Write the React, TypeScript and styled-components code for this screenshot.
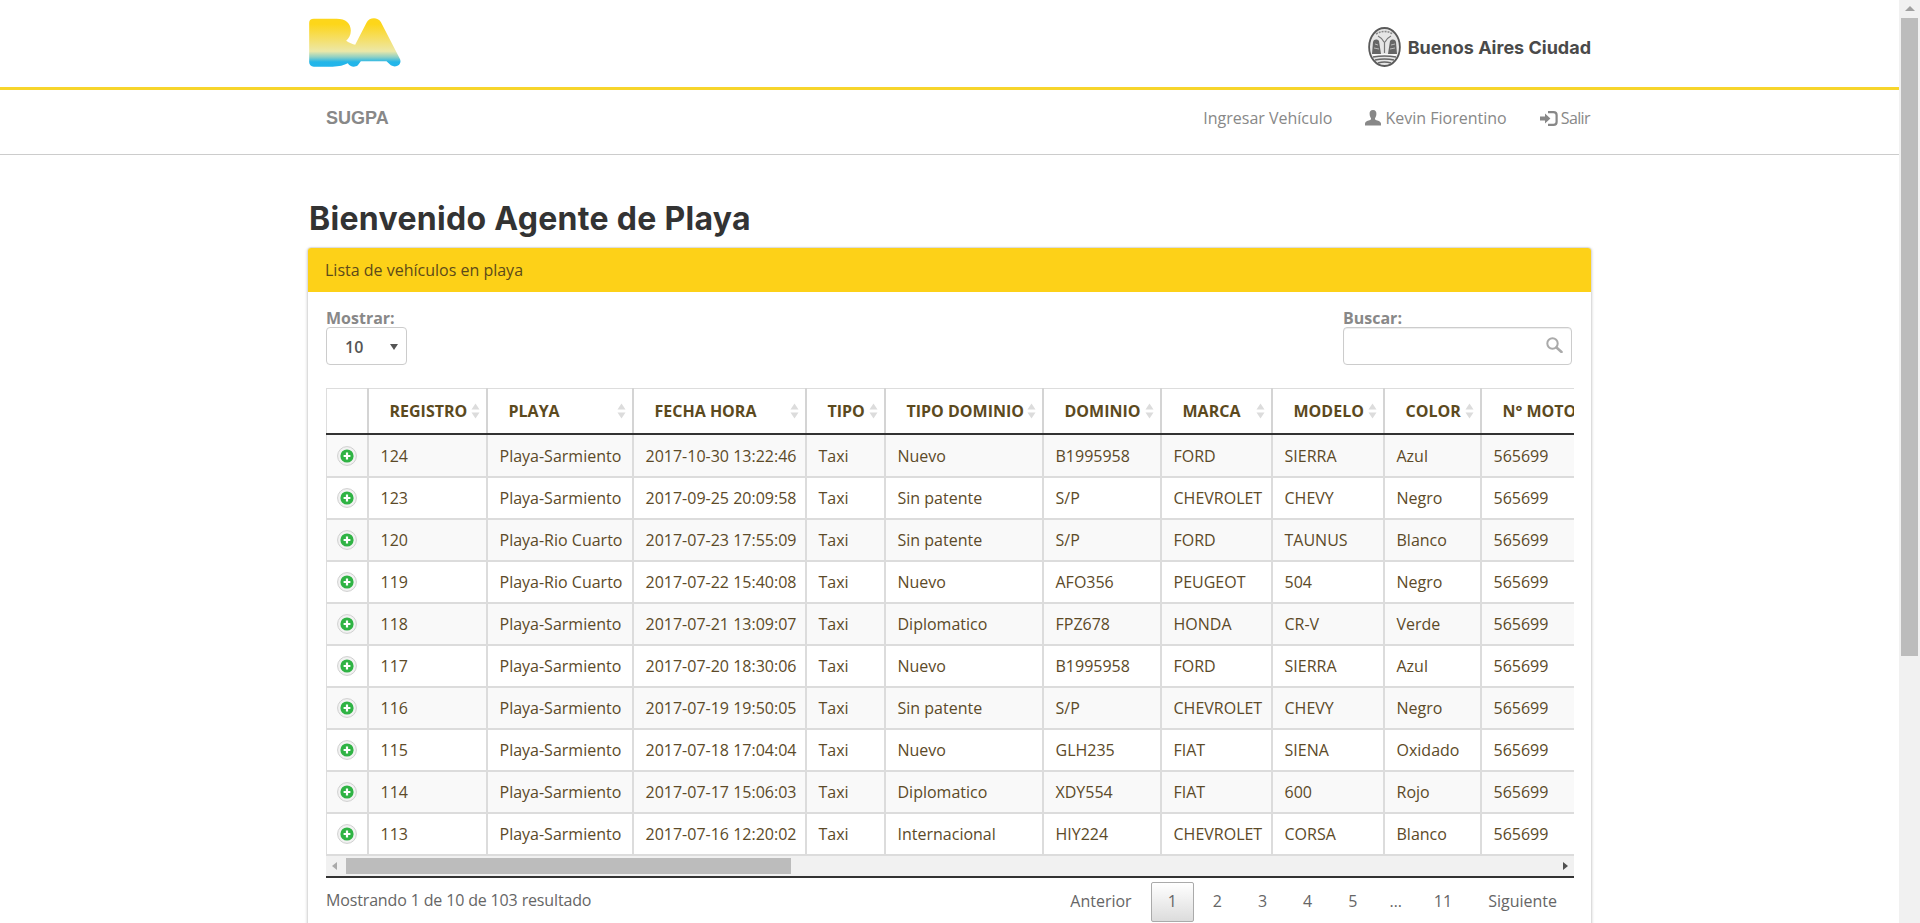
import { FC } from "react";
import styled, { createGlobalStyle } from "styled-components";

interface Vehicle {
  id: number;
  playa: string;
  fecha: string;
  tipo: string;
  tipoDominio: string;
  dominio: string;
  marca: string;
  modelo: string;
  color: string;
  motor: string;
}

const rows: Vehicle[] = [
  { id: 124, playa: "Playa-Sarmiento", fecha: "2017-10-30 13:22:46", tipo: "Taxi", tipoDominio: "Nuevo", dominio: "B1995958", marca: "FORD", modelo: "SIERRA", color: "Azul", motor: "565699" },
  { id: 123, playa: "Playa-Sarmiento", fecha: "2017-09-25 20:09:58", tipo: "Taxi", tipoDominio: "Sin patente", dominio: "S/P", marca: "CHEVROLET", modelo: "CHEVY", color: "Negro", motor: "565699" },
  { id: 120, playa: "Playa-Rio Cuarto", fecha: "2017-07-23 17:55:09", tipo: "Taxi", tipoDominio: "Sin patente", dominio: "S/P", marca: "FORD", modelo: "TAUNUS", color: "Blanco", motor: "565699" },
  { id: 119, playa: "Playa-Rio Cuarto", fecha: "2017-07-22 15:40:08", tipo: "Taxi", tipoDominio: "Nuevo", dominio: "AFO356", marca: "PEUGEOT", modelo: "504", color: "Negro", motor: "565699" },
  { id: 118, playa: "Playa-Sarmiento", fecha: "2017-07-21 13:09:07", tipo: "Taxi", tipoDominio: "Diplomatico", dominio: "FPZ678", marca: "HONDA", modelo: "CR-V", color: "Verde", motor: "565699" },
  { id: 117, playa: "Playa-Sarmiento", fecha: "2017-07-20 18:30:06", tipo: "Taxi", tipoDominio: "Nuevo", dominio: "B1995958", marca: "FORD", modelo: "SIERRA", color: "Azul", motor: "565699" },
  { id: 116, playa: "Playa-Sarmiento", fecha: "2017-07-19 19:50:05", tipo: "Taxi", tipoDominio: "Sin patente", dominio: "S/P", marca: "CHEVROLET", modelo: "CHEVY", color: "Negro", motor: "565699" },
  { id: 115, playa: "Playa-Sarmiento", fecha: "2017-07-18 17:04:04", tipo: "Taxi", tipoDominio: "Nuevo", dominio: "GLH235", marca: "FIAT", modelo: "SIENA", color: "Oxidado", motor: "565699" },
  { id: 114, playa: "Playa-Sarmiento", fecha: "2017-07-17 15:06:03", tipo: "Taxi", tipoDominio: "Diplomatico", dominio: "XDY554", marca: "FIAT", modelo: "600", color: "Rojo", motor: "565699" },
  { id: 113, playa: "Playa-Sarmiento", fecha: "2017-07-16 12:20:02", tipo: "Taxi", tipoDominio: "Internacional", dominio: "HIY224", marca: "CHEVROLET", modelo: "CORSA", color: "Blanco", motor: "565699" },
];

const columns = [
  { title: "", width: 41 },
  { title: "REGISTRO", width: 119 },
  { title: "PLAYA", width: 146 },
  { title: "FECHA HORA", width: 173 },
  { title: "TIPO", width: 79 },
  { title: "TIPO DOMINIO", width: 158 },
  { title: "DOMINIO", width: 118 },
  { title: "MARCA", width: 111 },
  { title: "MODELO", width: 112 },
  { title: "COLOR", width: 97 },
  { title: "N° MOTOR", width: 140 },
];

const firstPages = ["1", "2", "3", "4", "5"];

const BaLogo: FC = () => (
  <svg width="92" height="49" viewBox="0 0 275 147">
    <defs>
      <linearGradient id="baGrad" x1="0" y1="0" x2="0" y2="1">
        <stop offset="0.12" stopColor="#fdd61a" />
        <stop offset="0.4" stopColor="#f6de60" />
        <stop offset="0.68" stopColor="#ece8a8" />
        <stop offset="0.8" stopColor="#8fd0c4" />
        <stop offset="0.9" stopColor="#24b6e8" />
        <stop offset="1" stopColor="#22b5ec" />
      </linearGradient>
    </defs>
    <path
      fill="url(#baGrad)"
      d="M14 2 L82 2 C110 2 125 16 125 38 C125 52 118 62 111 68 C120 74 130 78 138 80 L172 14 C180 -2 205 -4 215 12 L272 122 C280 138 262 152 245 142 L232 130 L155 130 L146 142 C136 150 122 146 116 136 C105 142 90 146 70 146 L14 146 C5 146 0 140 0 132 L0 14 C0 6 5 2 14 2 Z"
    />
  </svg>
);

const CityArms: FC = () => (
  <svg width="33" height="40" viewBox="0 0 33 40">
    <ellipse cx="16.5" cy="20" rx="15.4" ry="19" fill="#e6e6e6" stroke="#5a5a5a" strokeWidth="1.8" />
    <path d="M8 7 Q16.5 2 25 7" fill="none" stroke="#8a8a8a" strokeWidth="1.6" strokeDasharray="2 1" />
    <path d="M10 9 Q14 11 16 15 M23 9 Q19 11 17 15 M16.5 15 L16.5 26" fill="none" stroke="#777" strokeWidth="1.2" />
    <path d="M5 15 C6 12 9 12 11 14 L13 27 L4 27 Z" fill="#666" />
    <path d="M22 14 C24 12 27 12 28 15 L29 27 L20 27 Z" fill="#666" />
    <path d="M7 17 L10 18 M6 21 L11 22 M23 18 L27 17 M22 22 L27 21" stroke="#bbb" strokeWidth="1" />
    <path d="M4 27 L29 27 L28 29 L5 29 Z" fill="#fafafa" />
    <path d="M5 30 Q16.5 28 28 30 M7 33 Q16.5 31 26 33 M10 36 Q16.5 34 23 36" fill="none" stroke="#666" strokeWidth="1.5" />
  </svg>
);

const UserIcon: FC = () => (
  <svg width="16" height="16" viewBox="0 0 16 16">
    <path
      fill="#888"
      d="M8 0 C10.6 0 11.6 1.8 11.4 4 C11.3 6 10.6 7.4 10 8.2 L10 9.6 C11.4 10.6 15.4 10.8 16 13.4 L16 15.4 L0 15.4 L0 13.4 C0.6 10.8 4.6 10.6 6 9.6 L6 8.2 C5.4 7.4 4.7 6 4.6 4 C4.4 1.8 5.4 0 8 0 Z"
    />
  </svg>
);

const LoginIcon: FC = () => (
  <svg width="18" height="15" viewBox="0 0 18 15">
    <path fill="#888" d="M0 5.5 L5 5.5 L5 2.4 L10.4 7.5 L5 12.6 L5 9.5 L0 9.5 Z" />
    <path
      fill="none"
      stroke="#888"
      strokeWidth="2.2"
      d="M8 1.1 L13.5 1.1 C15.4 1.1 16.6 2.3 16.6 4 L16.6 11 C16.6 12.7 15.4 13.9 13.5 13.9 L8 13.9"
    />
  </svg>
);

const SearchIcon: FC = () => (
  <svg width="17" height="16" viewBox="0 0 17 16">
    <circle cx="6.5" cy="6.5" r="5.2" fill="none" stroke="#aaa" strokeWidth="2" />
    <path d="M10.5 10.5 L15.5 15" stroke="#aaa" strokeWidth="2.6" strokeLinecap="round" />
  </svg>
);

const PlusIcon: FC = () => (
  <svg width="20" height="20" viewBox="0 0 20 20">
    <circle cx="10" cy="10" r="9.4" fill="#f2f2f2" stroke="#cfcfcf" />
    <circle cx="10" cy="10" r="6.6" fill="#2fb344" />
    <path d="M10 6.6 L10 13.4 M6.6 10 L13.4 10" stroke="#fff" strokeWidth="2.2" />
  </svg>
);

const SortIcon: FC = () => (
  <svg width="9" height="16" viewBox="0 0 9 16">
    <path d="M4.5 0.5 L8.5 6.5 L0.5 6.5 Z" fill="#dcdcdc" />
    <path d="M4.5 15.5 L8.5 9.5 L0.5 9.5 Z" fill="#dcdcdc" />
  </svg>
);

const App: FC = () => {
  return (
    <Page>
      <GlobalStyle />
      <TopHeader>
        <HeaderInner>
          <BaLogo />
          <CityBrand>
            <CityArms />
            <CityName>Buenos Aires Ciudad</CityName>
          </CityBrand>
        </HeaderInner>
      </TopHeader>
      <NavBar>
        <NavInner>
          <Brand>SUGPA</Brand>
          <NavLinks>
            <NavLink>Ingresar Vehículo</NavLink>
            <NavLink>
              <UserIcon />
              Kevin Fiorentino
            </NavLink>
            <ExitLink>
              <LoginIcon />
              Salir
            </ExitLink>
          </NavLinks>
        </NavInner>
      </NavBar>
      <Main>
        <Title>Bienvenido Agente de Playa</Title>
        <Panel>
          <PanelHeading>Lista de vehículos en playa</PanelHeading>
          <PanelBody>
            <Filters>
              <Field>
                <FieldLabel>Mostrar:</FieldLabel>
                <SelectBox>
                  <span>10</span>
                  <SelectCaret />
                </SelectBox>
              </Field>
              <Field>
                <FieldLabel>Buscar:</FieldLabel>
                <SearchBox>
                  <SearchIcon />
                </SearchBox>
              </Field>
            </Filters>
            <TableClip>
              <Table>
                <colgroup>
                  {columns.map((col, i) => (
                    <col key={i} style={{ width: col.width }} />
                  ))}
                </colgroup>
                <thead>
                  <tr>
                    {columns.map((col, i) => (
                      <HeadCell key={i}>
                        {col.title && (
                          <HeadInner>
                            <span>{col.title}</span>
                            {col.title !== "N° MOTOR" && <SortIcon />}
                          </HeadInner>
                        )}
                      </HeadCell>
                    ))}
                  </tr>
                </thead>
                <tbody>
                  {rows.map((row, i) => (
                    <Row key={row.id} $odd={i % 2 === 0}>
                      <IconCell>
                        <PlusIcon />
                      </IconCell>
                      <Cell>{row.id}</Cell>
                      <Cell>{row.playa}</Cell>
                      <Cell>{row.fecha}</Cell>
                      <Cell>{row.tipo}</Cell>
                      <Cell>{row.tipoDominio}</Cell>
                      <Cell>{row.dominio}</Cell>
                      <Cell>{row.marca}</Cell>
                      <Cell>{row.modelo}</Cell>
                      <Cell>{row.color}</Cell>
                      <Cell>{row.motor}</Cell>
                    </Row>
                  ))}
                </tbody>
              </Table>
            </TableClip>
            <HScroll>
              <HArrow $dir="left" />
              <HThumb />
              <HArrow $dir="right" />
            </HScroll>
            <TableFooter>
              <FooterInfo>Mostrando 1 de 10 de 103 resultado</FooterInfo>
              <Pagination>
                <PageButton $current={false}>Anterior</PageButton>
                {firstPages.map((p) => (
                  <PageButton key={p} $current={p === "1"}>
                    {p}
                  </PageButton>
                ))}
                <PageGap>…</PageGap>
                <PageButton $current={false}>11</PageButton>
                <PageButton $current={false}>Siguiente</PageButton>
              </Pagination>
            </TableFooter>
          </PanelBody>
        </Panel>
      </Main>
      <VScroll>
        <VArrow />
        <VThumb />
      </VScroll>
    </Page>
  );
};

export default App;

// styled-components
const GlobalStyle = createGlobalStyle`
  html, body {
    margin: 0;
    height: 923px;
    overflow: hidden;
    background: #fff;
  }
  * {
    box-sizing: border-box;
  }
  body {
    font-family: "Open Sans", "Noto Sans", sans-serif;
    font-size: 16px;
    color: #5c4a28;
  }
`;

const Page = styled.div`
  height: 923px;
  padding-right: 21px;
  overflow: hidden;
`;

const TopHeader = styled.header`
  height: 90px;
  border-bottom: 3px solid #f7d52b;
`;

const HeaderInner = styled.div`
  width: 1285px;
  height: 87px;
  margin: 0 auto;
  padding: 18px 1px 0 2px;
  display: flex;
  justify-content: space-between;
  align-items: flex-start;
`;

const CityBrand = styled.div`
  display: flex;
  align-items: center;
  gap: 7px;
  padding-top: 9px;
`;

const CityName = styled.span`
  font-family: "Inter", "Liberation Sans", sans-serif;
  font-size: 18px;
  font-weight: 700;
  color: #4a4a4a;
`;

const NavBar = styled.nav`
  height: 65px;
  border-bottom: 1px solid #ccc;
`;

const NavInner = styled.div`
  width: 1285px;
  height: 100%;
  margin: 0 auto;
  padding: 0 2px 8px 19px;
  display: flex;
  justify-content: space-between;
  align-items: center;
`;

const Brand = styled.span`
  font-family: "Liberation Sans", sans-serif;
  font-size: 18px;
  font-weight: 700;
  color: #888;
`;

const NavLinks = styled.div`
  display: flex;
  gap: 33px;
`;

const NavLink = styled.span`
  display: flex;
  align-items: center;
  gap: 4px;
  font-size: 16px;
  color: #888;
`;

const ExitLink = styled(NavLink)`
  gap: 3px;
  letter-spacing: -0.6px;
`;

const Main = styled.main`
  width: 1285px;
  margin: 0 auto;
`;

const Title = styled.h1`
  margin: 44px 0 8px;
  padding-left: 2px;
  font-family: "Inter", "Liberation Sans", sans-serif;
  font-size: 32px;
  line-height: 40px;
  font-weight: 700;
  letter-spacing: 0.3px;
  color: #333;
`;

const Panel = styled.section`
  height: 700px;
  border: 1px solid #ddd;
  border-radius: 4px;
  box-shadow: 0 1px 3px rgba(0, 0, 0, 0.18);
  background: #fff;
`;

const PanelHeading = styled.div`
  height: 44px;
  padding: 0 17px;
  display: flex;
  align-items: center;
  color: #5c4a1a;
  background: #fdd118;
  border-radius: 3px 3px 0 0;
`;

const PanelBody = styled.div`
  padding: 17px 17px 0 18px;
`;

const Filters = styled.div`
  display: flex;
  justify-content: space-between;
  padding-right: 2px;
  margin-bottom: 23px;
`;

const Field = styled.div`
  display: flex;
  flex-direction: column;
`;

const FieldLabel = styled.label`
  line-height: 18px;
  font-weight: 700;
  color: #888;
`;

const SelectBox = styled.div`
  width: 81px;
  height: 38px;
  padding: 2px 8px 0 18px;
  display: flex;
  justify-content: space-between;
  align-items: center;
  border: 1px solid #ccc;
  border-radius: 4px;
  font-weight: 600;
  color: #555;
`;

const SelectCaret = styled.i`
  width: 0;
  height: 0;
  border-left: 4px solid transparent;
  border-right: 4px solid transparent;
  border-top: 6px solid #555;
`;

const SearchBox = styled.div`
  width: 229px;
  height: 38px;
  padding: 0 8px 3px 0;
  display: flex;
  justify-content: flex-end;
  align-items: center;
  border: 1px solid #ccc;
  border-radius: 4px;
  box-shadow: inset 0 1px 1px rgba(0, 0, 0, 0.075);
`;

const TableClip = styled.div`
  width: 1248px;
  overflow: hidden;
`;

const Table = styled.table`
  width: 1294px;
  table-layout: fixed;
  border-collapse: collapse;
  border-top: 1px solid #ddd;
  border-left: 1px solid #ddd;
`;

const HeadCell = styled.th`
  height: 45px;
  padding: 0 6px 0 21px;
  border-right: 2px solid #d4d4d4;
  border-bottom: 2px solid #333;
  font-size: 16px;
  font-weight: 700;
  text-align: left;
  white-space: nowrap;
  color: #5c4a1e;
`;

const HeadInner = styled.div`
  display: flex;
  justify-content: space-between;
  align-items: center;
`;

const Cell = styled.td`
  padding: 0 12px;
  border-right: 2px solid #dcdcdc;
  border-bottom: 2px solid #dcdcdc;
  font-size: 16px;
  white-space: nowrap;
  color: #5c4a28;
`;

const Row = styled.tr<{ $odd: boolean }>`
  height: 42px;
  background: ${(props) => (props.$odd ? "#f9f9f9" : "#fff")};

  &:first-child {
    height: 43px;
  }

  &:first-child td {
    padding-top: 2px;
  }
`;

const IconCell = styled(Cell)`
  padding: 1px 0 0 10px;

  svg {
    display: block;
  }
`;

const HScroll = styled.div`
  width: 1248px;
  height: 22px;
  padding: 2px 0 2px;
  display: flex;
  align-items: stretch;
  justify-content: space-between;
  background: #f1f1f1;
  border-bottom: 2px solid #333;
`;

const HArrow = styled.i<{ $dir: "left" | "right" }>`
  width: 0;
  height: 0;
  align-self: center;
  margin: 0 6px;
  border-top: 4px solid transparent;
  border-bottom: 4px solid transparent;
  ${(props) =>
    props.$dir === "left"
      ? "border-right: 5px solid #aaa;"
      : "border-left: 5px solid #505050;"}
`;

const HThumb = styled.div`
  width: 445px;
  margin-right: auto;
  margin-left: 3px;
  background: #bcbcbc;
`;

const TableFooter = styled.div`
  width: 1248px;
  height: 44px;
  padding-top: 4px;
  display: flex;
  justify-content: space-between;
  align-items: center;
  color: #666;
`;

const FooterInfo = styled.span`
  padding-bottom: 3px;
  letter-spacing: -0.15px;
`;

const Pagination = styled.div`
  display: flex;
  align-items: center;
`;

const PageButton = styled.span<{ $current: boolean }>`
  height: 40px;
  margin-left: 2px;
  padding: 0 16px 2px;
  display: flex;
  align-items: center;
  border: 1px solid transparent;
  border-radius: 2px;
  color: #666;
  ${(props) =>
    props.$current
      ? `border-color: #aaa;
         background: linear-gradient(#fff, #dcdcdc);`
      : ""}
`;

const PageGap = styled.span`
  margin-left: 2px;
  padding: 0 13px 2px;
  color: #666;
`;

const VScroll = styled.div`
  position: fixed;
  top: 0;
  right: 0;
  bottom: 0;
  width: 21px;
  padding: 0 2px;
  background: #f1f1f1;
`;

const VArrow = styled.div`
  width: 0;
  height: 0;
  margin: 6px auto 7px;
  border-left: 5px solid transparent;
  border-right: 5px solid transparent;
  border-bottom: 5px solid #a0a0a0;
`;

const VThumb = styled.div`
  height: 638px;
  background: #bcbcbc;
`;
